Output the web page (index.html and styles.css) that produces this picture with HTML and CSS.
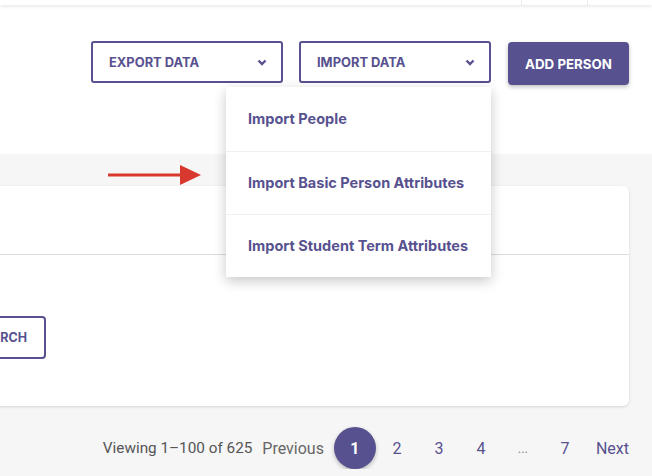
FILE: index.html
```html
<!DOCTYPE html>
<html>
	<head>
		<meta charset="utf-8"/>
		<meta name="viewport" content="width=device-width"/>
		<link rel="stylesheet" href="styles.css">
	</head>
	<body>
		<div class="topbar">
			<div class="tab"></div>
			<div class="tab"></div>
		</div>
		<div class="toolbar">
			<div class="select">
				<button class="outline">EXPORT DATA
					<svg width="10" height="7" viewBox="0 0 10 7"><polyline points="1.5,1.5 5,5 8.5,1.5" fill="none" stroke="#57518f" stroke-width="2.4"/></svg>
				</button>
			</div>
			<div class="select">
				<button class="outline">IMPORT DATA
					<svg width="10" height="7" viewBox="0 0 10 7"><polyline points="1.5,1.5 5,5 8.5,1.5" fill="none" stroke="#57518f" stroke-width="2.4"/></svg>
				</button>
				<div class="menu">
					<div class="item">Import People</div>
					<div class="item">Import Basic Person Attributes</div>
					<div class="item">Import Student Term Attributes</div>
				</div>
			</div>
			<button class="primary">ADD PERSON</button>
		</div>
		<div class="content">
			<div class="arrow">
				<svg width="94" height="22" viewBox="0 0 94 22"><line x1="0" y1="11" x2="76" y2="11" stroke="#d9382e" stroke-width="3"/><polygon points="72,1 93,11 72,21" fill="#d9382e"/></svg>
			</div>
			<div class="card">
				<div class="card-head"></div>
				<div class="card-body">
					<button class="search">SEARCH</button>
				</div>
			</div>
			<div class="pager">
				<span class="info">Viewing 1–100 of 625</span>
				<span class="prev">Previous</span>
				<span class="page current">1</span>
				<span class="page">2</span>
				<span class="page">3</span>
				<span class="page">4</span>
				<span class="page dots">...</span>
				<span class="page">7</span>
				<span class="next">Next</span>
			</div>
		</div>
	</body>
</html>
```

FILE: styles.css
```css
body{
	margin:0;
	font-family:Roboto, "Liberation Sans", sans-serif;
	background-color:#f6f6f6;
	overflow:hidden;
}
.topbar{
	height:5px;
	background-color:#fff;
	box-shadow:0 1px 4px rgba(0,0,0,0.12);
	display:flex;
	padding-left:521px;
	position:relative;
	z-index:2;
}
.topbar .tab{
	width:79px;
	border-left:1px solid #ececec;
}
.toolbar{
	height:149px;
	background-color:#fff;
	display:flex;
	justify-content:flex-end;
	align-items:flex-start;
	gap:16px;
	padding:36px 23px 0 0;
	box-sizing:border-box;
}
.select{
	position:relative;
}
button{
	font-family:Inter, Roboto, sans-serif;
	font-weight:700;
	font-size:12.9px;
	cursor:pointer;
}
.outline{
	width:192px;
	height:42px;
	background-color:#fff;
	border:2px solid #57518f;
	border-radius:3px;
	color:#57518f;
	display:flex;
	justify-content:space-between;
	align-items:center;
	padding:0 14px 0 16px;
}
.primary{
	margin-left:1px;
	width:121px;
	height:43px;
	margin-top:1px;
	background-color:#57518f;
	color:#fff;
	border:0;
	border-radius:4px;
	box-shadow:0 2px 4px rgba(0,0,0,0.25);
	font-size:13.3px;
}
.menu{
	position:absolute;
	top:46px;
	right:0;
	width:265px;
	background-color:#fff;
	box-shadow:0 4px 12px rgba(0,0,0,0.22);
	z-index:5;
}
.menu .item{
	height:63px;
	display:flex;
	align-items:center;
	padding:0 0 2px 22px;
	box-sizing:border-box;
	color:#57518f;
	font-family:Inter, Roboto, sans-serif;
	font-size:14.5px;
	font-weight:700;
	border-top:1px solid #f0f0f0;
}
.menu .item:first-child{
	border-top:0;
	height:64px;
}
.content{
	position:relative;
	padding-top:32px;
}
.arrow{
	position:absolute;
	left:108px;
	top:10px;
	line-height:0;
}
.card{
	margin:0 23px 0 -80px;
	height:220px;
	background-color:#fff;
	border-radius:6px;
	box-shadow:0 1px 3px rgba(0,0,0,0.14);
}
.card-head{
	height:68px;
	border-bottom:1px solid #dcdcdc;
}
.card-body{
	padding:61px 0 0 26px;
}
.search{
	width:100px;
	height:43px;
	background-color:#fff;
	border:2px solid #57518f;
	border-radius:4px;
	color:#57518f;
	font-size:12.5px;
	padding:0 17px 0 0;
	text-align:right;
}
.pager{
	display:flex;
	justify-content:flex-end;
	align-items:center;
	padding:21px 23px 0 0;
	font-size:16px;
}
.info{
	color:#555;
	font-size:15.3px;
	margin-right:10px;
}
.prev{
	color:#666;
	margin-right:10px;
}
.page{
	width:42px;
	height:42px;
	display:flex;
	justify-content:center;
	align-items:center;
	color:#57518f;
}
.current{
	background-color:#57518f;
	color:#fff;
	border-radius:50%;
	font-weight:700;
	box-shadow:0 2px 4px rgba(0,0,0,0.25);
}
.dots{
	color:#888;
	font-size:13px;
}
.next{
	color:#57518f;
	margin-left:10px;
}
```
